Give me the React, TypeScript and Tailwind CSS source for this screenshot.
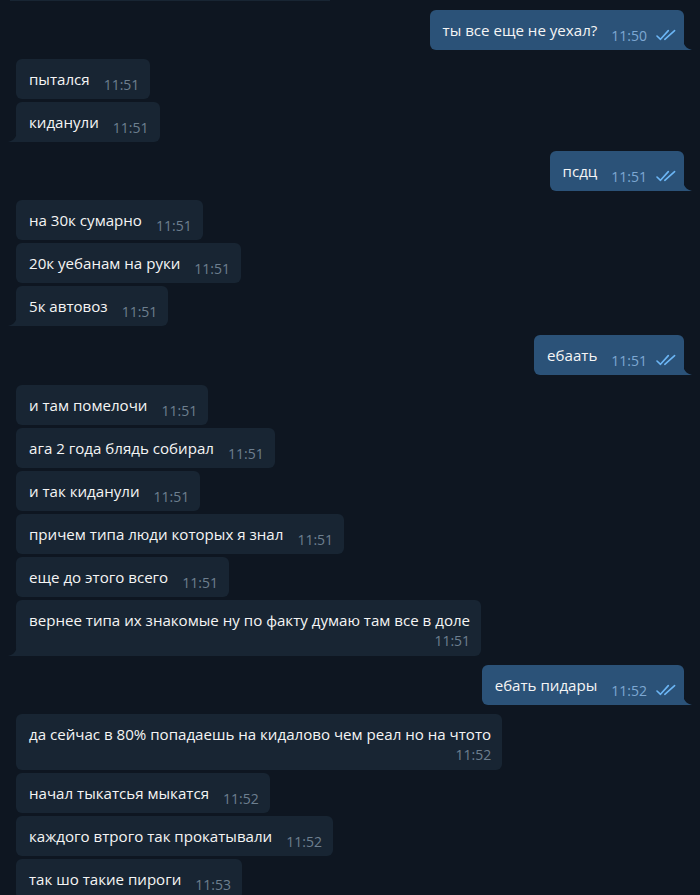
import React from 'react'

type Msg = {
    text: string
    time: string
    out?: boolean
    tail?: boolean
    wrap?: boolean
    gap?: number
}

const messages: Msg[] = [
    { text: 'ты все еще не уехал?', time: '11:50', out: true, tail: true, gap: 9 },
    { text: 'пытался', time: '11:51', gap: 9 },
    { text: 'киданули', time: '11:51', tail: true },
    { text: 'псдц', time: '11:51', out: true, tail: true, gap: 9 },
    { text: 'на 30к сумарно', time: '11:51', gap: 9 },
    { text: '20к уебанам на руки', time: '11:51' },
    { text: '5к автовоз', time: '11:51', tail: true },
    { text: 'ебаать', time: '11:51', out: true, tail: true, gap: 9 },
    { text: 'и там помелочи', time: '11:51', gap: 10 },
    { text: 'ага 2 года блядь собирал', time: '11:51' },
    { text: 'и так киданули', time: '11:51' },
    { text: 'причем типа люди которых я знал', time: '11:51' },
    { text: 'еще до этого всего', time: '11:51' },
    { text: 'вернее типа их знакомые ну по факту думаю там все в доле', time: '11:51', tail: true, wrap: true },
    { text: 'ебать пидары', time: '11:52', out: true, tail: true, gap: 9 },
    { text: 'да сейчас в 80% попадаешь на кидалово чем реал но на чтото', time: '11:52', wrap: true, gap: 9 },
    { text: 'начал тыкатсья мыкатся', time: '11:52' },
    { text: 'каждого втрого так прокатывали', time: '11:52' },
    { text: 'так шо такие пироги', time: '11:53' },
]

const Checks = () => (
    <svg width="20" height="12" viewBox="0 0 20 12" fill="none" className="ml-[9px] mb-[3px]">
        <path d="M1 7 L4.5 10.3 L12.3 1.6" stroke="#6cb6f5" strokeWidth="1.6" strokeLinecap="round" strokeLinejoin="round" />
        <path d="M8.8 10.3 L18.6 1.6" stroke="#6cb6f5" strokeWidth="1.6" strokeLinecap="round" strokeLinejoin="round" />
    </svg>
)

const Tail = ({ out }: { out?: boolean }) =>
    out ? (
        <svg width="9" height="12" viewBox="0 0 9 12" className="absolute bottom-0 right-[-8px]">
            <path d="M0 0 C0 7 3 10.5 9 12 L0 12 Z" fill="#2b5278" />
        </svg>
    ) : (
        <svg width="9" height="12" viewBox="0 0 9 12" className="absolute bottom-0 left-[-8px]">
            <path d="M9 0 C9 7 6 10.5 0 12 L9 12 Z" fill="#182533" />
        </svg>
    )

const Bubble = ({ m }: { m: Msg }) => {
    const bg = m.out ? 'bg-[#2b5278]' : 'bg-[#182533]'
    const corner = m.tail ? (m.out ? 'rounded-br-none' : 'rounded-bl-none') : ''
    const timeColor = m.out ? 'text-[#7da8d3]' : 'text-[#6d7f8f]'
    const top = m.gap === 10 ? 'mt-[10px]' : m.gap === 9 ? 'mt-[9px]' : 'mt-[3px]'

    return (
        <div className={`flex ${m.out ? 'justify-end pr-[16px]' : 'justify-start pl-[16px]'} ${top}`}>
            <div className={`relative ${bg} rounded-[6px] ${corner} pl-[13px] ${m.out ? 'pr-[8px]' : 'pr-[11px]'}`}>
                {m.wrap ? (
                    <div className="flex flex-col pt-[10px] pb-[5px]">
                        <span className="text-[15.1px] leading-5 text-[#f5f5f5]">{m.text}</span>
                        <span className={`self-end text-[14px] leading-[21px] ${timeColor}`}>{m.time}</span>
                    </div>
                ) : (
                    <div className="flex items-end pt-[10px] pb-[6px]">
                        <span className="text-[15.1px] leading-5 text-[#f5f5f5] mb-[4px]">{m.text}</span>
                        <span className={`ml-[14px] text-[14px] leading-[16px] ${timeColor}`}>{m.time}</span>
                        {m.out && <Checks />}
                    </div>
                )}
                {m.tail && <Tail out={m.out} />}
            </div>
        </div>
    )
}

const App = () => {
    return (
        <div className="w-[700px] h-[895px] overflow-hidden bg-[#0e1621]" style={{ fontFamily: '"Open Sans", "Noto Sans", sans-serif' }}>
            <div className="ml-[10px] w-[320px] h-[1px] bg-[#182533]" />
            {messages.map((m, i) => (
                <Bubble key={i} m={m} />
            ))}
        </div>
    )
}

export default App
